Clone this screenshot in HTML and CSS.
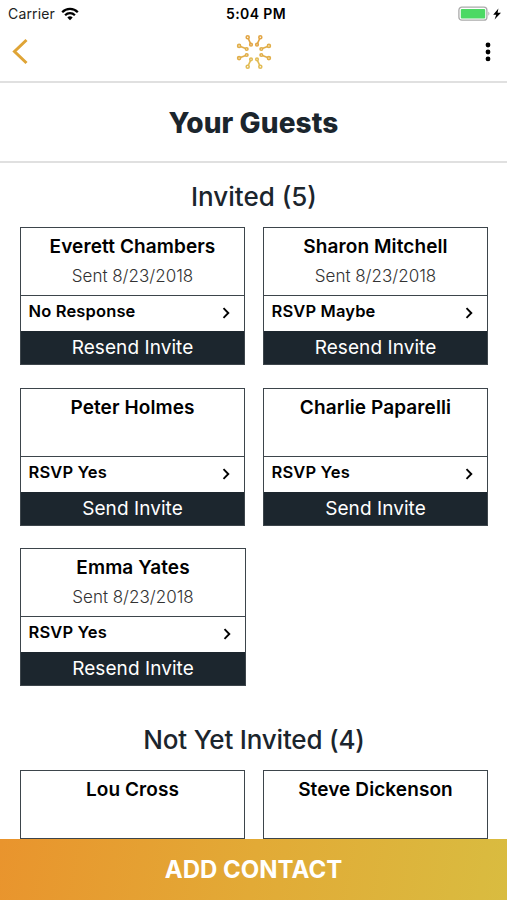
FILE: index.html
```html
<!DOCTYPE html>
<html lang="en">
<head>
<meta charset="utf-8">
<title>Your Guests</title>
<link rel="stylesheet" href="styles.css">
</head>
<body>
<div class="app">
  <div class="status">
    <div class="carrier"><span>Carrier</span>
      <svg width="18" height="14" viewBox="0 0 18 14" fill="none" stroke="#000" stroke-width="2.3"><path d="M1.2 5.2a11 11 0 0 1 15.6 0M4.1 8.2a7 7 0 0 1 9.8 0"/><path d="M9 13.3L6.3 10.6a3.9 3.9 0 0 1 5.4 0z" fill="#000" stroke="none"/></svg>
    </div>
    <div class="time">5:04 PM</div>
    <div class="power">
      <svg width="44" height="16" viewBox="0 0 44 16"><rect x=".9" y="1.2" width="28" height="13" rx="3" fill="#fff" stroke="#aaa" stroke-width="1.3"/><rect x="2.8" y="3" width="24.4" height="9.4" rx="1" fill="#4cd964"/><path d="M30.4 5.6q2 2.1 0 4.2z" fill="#aaa"/><path d="M40.4 2.5L35.200 8.7h3l-1.6 4.9 6.400-6.8h-3.4z" fill="#000"/></svg>
    </div>
  </div>
  <header class="nav">
    <svg class="back" width="18" height="28" viewBox="0 0 18 28" fill="none" stroke="#dfa436" stroke-width="3"><path d="M15.5 3L3.500 14.500l12 11.500"/></svg>
    <svg class="logo" width="36" height="36" viewBox="0 0 36 36" fill="none" stroke-width="1.600">
      <g stroke="#e2a544"><path d="M12.300 4.600l2.400 5.200M23.700 4.600l-2.400 5.200"/><circle cx="11.700" cy="3.300" r="1.500"/><circle cx="15" cy="10.700" r="1.300"/><circle cx="24.300" cy="3.300" r="1.500"/><circle cx="21" cy="10.700" r="1.300"/></g>
      <g stroke="#e1ae48"><path d="M4.400 12.400l5.300 2.200M31.600 12.400l-5.300 2.200M4.400 23.600l5.300-2.200M31.600 23.600l-5.300-2.200"/><circle cx="3.100" cy="11.900" r="1.500"/><circle cx="10.700" cy="15" r="1.300"/><circle cx="32.900" cy="11.900" r="1.500"/><circle cx="25.300" cy="15" r="1.300"/><circle cx="3.100" cy="24.100" r="1.500"/><circle cx="10.700" cy="21" r="1.300"/><circle cx="32.900" cy="24.100" r="1.500"/><circle cx="25.300" cy="21" r="1.300"/></g>
      <g stroke="#e2bc55"><path d="M12.300 31.400l2.400-5.200M23.700 31.400l-2.400-5.200"/><circle cx="11.700" cy="32.700" r="1.500"/><circle cx="15" cy="25.300" r="1.300"/><circle cx="24.300" cy="32.700" r="1.500"/><circle cx="21" cy="25.300" r="1.300"/></g>
    </svg>
    <svg class="more" width="6" height="20" viewBox="0 0 6 20"><circle cx="3" cy="3" r="2.400"/><circle cx="3" cy="10" r="2.400"/><circle cx="3" cy="16.900" r="2.400"/></svg>
  </header>
  <h1 class="title">Your Guests</h1>
  <main>
    <h2>Invited (5)</h2>
    <div class="grid">
      <article class="card">
        <div class="who"><h3>Everett Chambers</h3><p>Sent 8/23/2018</p></div>
        <div class="rsvp"><span>No Response</span><svg class="chev" viewBox="0 0 8 12"><path d="M1.500 1.200L6.300 6 1.500 10.800"/></svg></div>
        <div class="action">Resend Invite</div>
      </article>
      <article class="card">
        <div class="who"><h3>Sharon Mitchell</h3><p>Sent 8/23/2018</p></div>
        <div class="rsvp"><span>RSVP Maybe</span><svg class="chev" viewBox="0 0 8 12"><path d="M1.500 1.200L6.300 6 1.500 10.800"/></svg></div>
        <div class="action">Resend Invite</div>
      </article>
      <article class="card">
        <div class="who"><h3>Peter Holmes</h3></div>
        <div class="rsvp"><span>RSVP Yes</span><svg class="chev" viewBox="0 0 8 12"><path d="M1.500 1.200L6.300 6 1.500 10.800"/></svg></div>
        <div class="action">Send Invite</div>
      </article>
      <article class="card">
        <div class="who"><h3>Charlie Paparelli</h3></div>
        <div class="rsvp"><span>RSVP Yes</span><svg class="chev" viewBox="0 0 8 12"><path d="M1.500 1.200L6.300 6 1.500 10.800"/></svg></div>
        <div class="action">Send Invite</div>
      </article>
      <article class="card wide">
        <div class="who"><h3>Emma Yates</h3><p>Sent 8/23/2018</p></div>
        <div class="rsvp"><span>RSVP Yes</span><svg class="chev" viewBox="0 0 8 12"><path d="M1.500 1.200L6.300 6 1.500 10.800"/></svg></div>
        <div class="action">Resend Invite</div>
      </article>
    </div>
    <h2 class="later">Not Yet Invited (4)</h2>
    <div class="grid">
      <article class="card"><div class="who"><h3>Lou Cross</h3></div></article>
      <article class="card"><div class="who"><h3>Steve Dickenson</h3></div></article>
    </div>
  </main>
  <footer class="add">ADD CONTACT</footer>
</div>
</body>
</html>
```
FILE: styles.css
```css
* { box-sizing: border-box; }
body, h1, h2, h3, p { margin: 0; }
body { background: #fff; font-family: Inter, sans-serif; color: #000; }
svg { display: block; }
.app { width: 507px; height: 900px; overflow: hidden; display: flex; flex-direction: column; }
.status { flex: none; height: 27px; display: grid; grid-template-columns: 1fr auto 1fr; align-items: center; padding: 0 5px 0 8px; }
.carrier { display: flex; align-items: center; gap: 6px; font-size: 14px; line-height: 27px; color: #222; letter-spacing: .15px; }
.time { font-size: 14px; font-weight: 600; letter-spacing: .4px; padding-left: 2px; }
.power { display: flex; justify-content: flex-end; }
.nav { flex: none; height: 56px; border-bottom: 2px solid #e0e0e0; display: grid; grid-template-columns: 1fr auto 1fr; align-items: start; padding: 7px 16px 0; }
.back { margin: 3px 0 0 -5px; }
.logo { margin-left: 1px; }
.more { margin-top: 8px; justify-self: end; }
.title { flex: none; height: 80px; border-bottom: 2px solid #e0e0e0; text-align: center; font-size: 28px; letter-spacing: .1px; line-height: 80px; font-weight: 800; color: #1b252d; }
main { flex: 1; min-height: 0; overflow: hidden; padding: 0 19px 0 20px; }
h2 { height: 64px; text-align: center; font-size: 26px; font-weight: 500; line-height: 68px; color: #1b252d; }
h2.later { height: 84px; line-height: 107px; letter-spacing: -.18px; }
.grid { display: grid; grid-template-columns: 225px 225px; column-gap: 18px; row-gap: 22.500px; }
.card { border: 1px solid #3d454b; }
.wide { width: 226px; }
.who { height: 67px; text-align: center; }
h3 { font-size: 19px; font-weight: 600; letter-spacing: .1px; line-height: 24px; padding-top: 7px; }
.who p { font-size: 17px; font-weight: 300; line-height: 22px; color: #333; padding-top: 6px; }
.rsvp { height: 36px; border-top: 1px solid #3d454b; display: flex; justify-content: space-between; padding: 0 14px 0 7.500px; font-size: 16.500px; font-weight: 600; letter-spacing: .15px; line-height: 31px; }
.chev { width: 8px; height: 12px; margin-top: 11px; fill: none; stroke: #000; stroke-width: 1.900; }
.action { height: 33px; background: #1c262e; color: #fff; text-align: center; font-size: 19px; line-height: 34px; letter-spacing: .06px; }
.add { flex: none; height: 61px; background: linear-gradient(100deg, #e9942d, #e2aa36 50%, #d9bc40); color: #fff; text-align: center; font-size: 24px; font-weight: 700; line-height: 62px; }
```
